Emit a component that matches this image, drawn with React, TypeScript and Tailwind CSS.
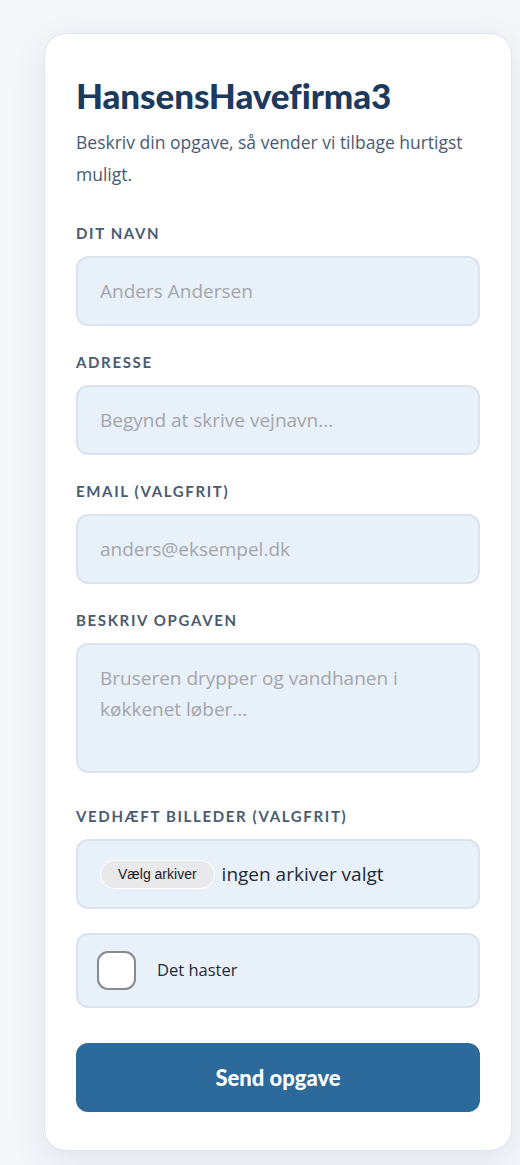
import React from 'react';

const labelCls =
  "block text-[15px] leading-[20px] font-bold uppercase tracking-[0.11em] text-[#4a5b71] font-['Lato','Noto_Sans',sans-serif] mb-[13px]";
const fieldCls =
  "block w-full h-[70px] rounded-[12px] border-2 border-[#dbe3ee] bg-[#e8f0fa] px-[22px] text-[19px] text-[#1f2a37] placeholder:text-[#a3a6ab] font-['Open_Sans','Noto_Sans',sans-serif] outline-none";

const Field: React.FC<{ label: string; placeholder: string }> = ({ label, placeholder }) => (
  <div className="mb-[26px]">
    <label className={labelCls}>{label}</label>
    <input type="text" placeholder={placeholder} className={fieldCls} />
  </div>
);

export default function App() {
  return (
    <div className="min-h-[1165px] bg-[#f4f6fa] pl-[44px] pt-[33px] pb-[15px]">
      <div className="w-[468px] rounded-[22px] border border-[#dde4ed] bg-white px-[31px] pt-[38px] pb-[38px] shadow-[0_12px_36px_rgba(30,50,80,0.09)]">
        <h1 className="text-[35px] leading-[46px] font-black tracking-[-0.1px] text-[#1b3a5e] font-['Lato','Noto_Sans',sans-serif]">
          HansensHavefirma3
        </h1>
        <p className="mt-[8px] mb-[33px] text-[17.5px] leading-[32px] text-[#4a5b71] font-['Open_Sans','Noto_Sans',sans-serif]">
          Beskriv din opgave, så vender vi tilbage hurtigst muligt.
        </p>

        <Field label="Dit navn" placeholder="Anders Andersen" />
        <Field label="Adresse" placeholder="Begynd at skrive vejnavn..." />
        <Field label="Email (valgfrit)" placeholder="anders@eksempel.dk" />

        <div className="mb-[33px]">
          <label className={labelCls}>Beskriv opgaven</label>
          <textarea
            placeholder="Bruseren drypper og vandhanen i køkkenet løber..."
            className="block w-full h-[130px] resize-none rounded-[12px] border-2 border-[#dbe3ee] bg-[#e8f0fa] px-[22px] pt-[18px] pr-[60px] text-[19px] leading-[31px] text-[#1f2a37] placeholder:text-[#a3a6ab] font-['Open_Sans','Noto_Sans',sans-serif] outline-none"
          />
        </div>

        <div className="mb-[24px]">
          <label className={labelCls}>Vedhæft billeder (valgfrit)</label>
          <div className="flex h-[70px] items-center gap-[7px] rounded-[12px] border-2 border-[#dbe3ee] bg-[#e8f0fa] px-[22px]">
            <span className="rounded-full border border-white bg-[#e9e9eb] px-[17px] py-[3px] text-[14px] text-[#1c1c1e] font-['Liberation_Sans','Noto_Sans',sans-serif]">
              Vælg arkiver
            </span>
            <span className="text-[19px] text-[#1f2a37] font-['Open_Sans','Noto_Sans',sans-serif]">
              ingen arkiver valgt
            </span>
          </div>
        </div>

        <label className="mb-[35px] flex h-[75px] items-center gap-[21px] rounded-[12px] border-2 border-[#dbe3ee] bg-[#e8f0fa] px-[19px]">
          <span className="h-[39px] w-[39px] rounded-[11px] border-2 border-[#8a8a8e] bg-white" />
          <span className="text-[16.5px] text-[#1f2a37] font-['Open_Sans','Noto_Sans',sans-serif]">Det haster</span>
        </label>

        <button
          type="button"
          className="block h-[69px] w-full rounded-[12px] bg-[#2d6a9c] text-[22px] font-black text-white font-['Lato','Noto_Sans',sans-serif]"
        >
          Send opgave
        </button>
      </div>
    </div>
  );
}
